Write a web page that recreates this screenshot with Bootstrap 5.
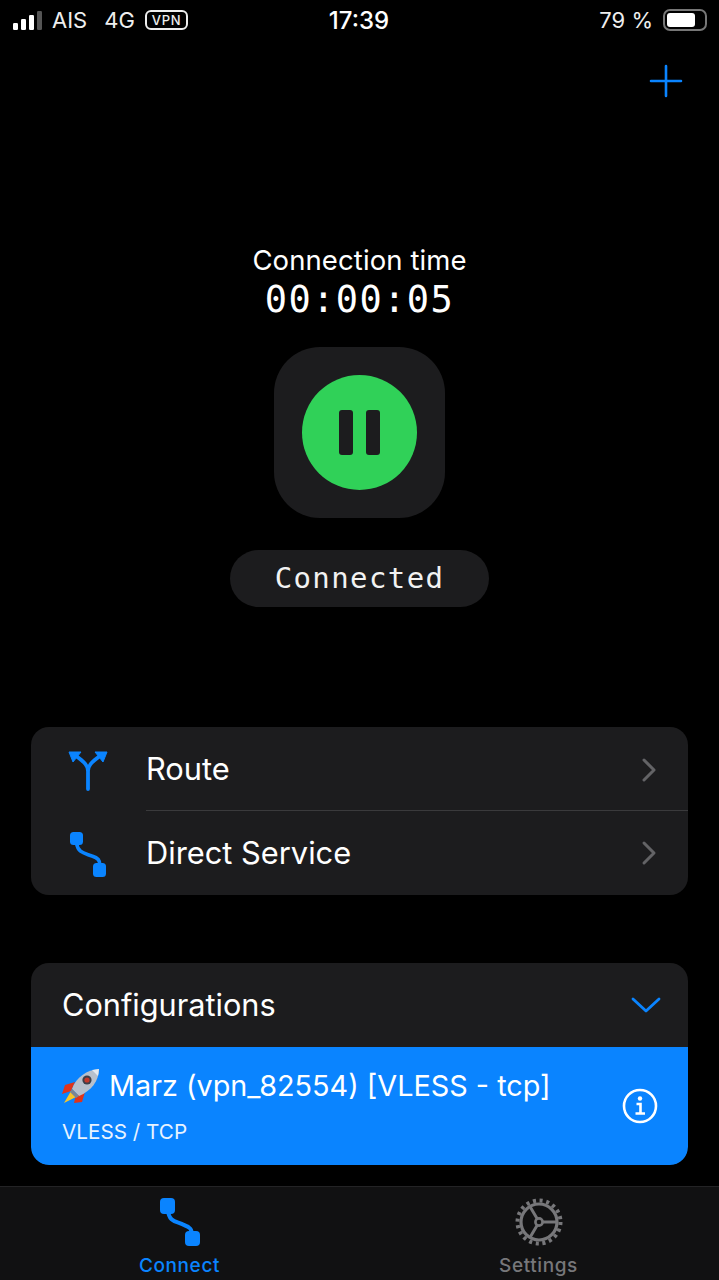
<!DOCTYPE html>
<html lang="en">
<head>
  <meta charset="UTF-8" />
  <meta name="viewport" content="width=device-width, initial-scale=1.0" />
  <title>VPN - Connect</title>
  <link href="https://cdn.jsdelivr.net/npm/bootstrap@5.3.3/dist/css/bootstrap.min.css" rel="stylesheet" />
  <style>
    body {
      background-color: #000;
      color: #fff;
      font-family: "Inter", "Liberation Sans", sans-serif;
      width: 719px;
      height: 1280px;
      overflow: hidden;
    }
    .screen { height: 1280px; }
    .status-bar {
      height: 40px;
      padding: 0 12px 0 13px;
      font-size: 22px;
      color: #eee;
    }
    .status-left { width: 260px; gap: 7px; }
    .status-right { width: 260px; gap: 10px; }
    .status-time { font-size: 24px; font-weight: 500; color: #fff; padding-top: 1px; padding-right: 2px; }
    .carrier { margin-right: 10px; }
    .vpn-tag {
      border: 2px solid #eee;
      border-radius: 6px;
      font-size: 13px;
      font-weight: 500;
      line-height: 16px;
      padding: 0 5px;
      margin-left: 3px;
      letter-spacing: .7px;
    }
    .battery {
      width: 44px;
      height: 22px;
      border: 2px solid #777;
      border-radius: 7px;
      padding: 2px;
    }
    .battery-fill { height: 100%; background: #fff; border-radius: 3px; }
    .add-row { height: 82px; padding-right: 36px; padding-top: 24px; }
    .hero { margin-top: 118px; }
    .time-label { font-size: 27.5px; line-height: 40px; letter-spacing: .1px; }
    .time-value, .state-text { font-family: "DejaVu Sans Mono", "Liberation Mono", monospace; }
    .time-value { font-size: 37px; line-height: 40px; letter-spacing: 1.4px; }
    .power-tile {
      width: 171px;
      height: 171px;
      margin-top: 27px;
      background: #1c1c1e;
      border-radius: 46px;
    }
    .power-btn {
      width: 115px;
      height: 115px;
      background: #30d158;
      border-radius: 50%;
      gap: 13px;
    }
    .pause-bar { width: 14px; height: 45px; background: #1c1c1e; border-radius: 3px; }
    .state-pill {
      width: 259px;
      height: 57px;
      margin-top: 32px;
      background: #1c1c1e;
      border-radius: 29px;
      font-size: 29px;
      letter-spacing: 1.4px;
      color: #f2f2f2;
    }
    .panel {
      margin: 0 31px;
      background: #1c1c1e;
      border-radius: 18px;
      overflow: hidden;
    }
    .panel-routes { margin-top: 120px; }
    .panel-configs { margin-top: 68px; }
    .route-row { height: 85px; font-size: 30.8px; }
    .route-row:first-child { height: 83px; }
    .route-row:first-child .route-body { padding-top: 2px; }
    .route-icon { width: 115px; padding-left: 37px; }
    .route-body { height: 100%; padding-right: 31px; }
    .route-row + .route-row .route-body { border-top: 1px solid #3a3a3c; }
    .config-head { height: 84px; padding: 0 27px 0 31px; font-size: 30.7px; }
    .config-item {
      height: 118px;
      background: #0a84ff;
      padding: 0 30px 0 31px;
      border-radius: 0 0 18px 18px;
    }
    .config-name { font-size: 28.8px; line-height: 34px; gap: 9px; }
    .config-type { font-size: 20.7px; line-height: 26px; margin-top: 15px; color: #e8f3ff; }
    .tab-bar {
      margin-top: 21px;
      height: 94px;
      background: #111112;
      border-top: 1px solid #232325;
    }
    .tab-item { width: 359px; font-size: 19px; font-weight: 500; letter-spacing: .6px; line-height: 24px; padding-top: 11px; }
    .tab-item svg { margin-bottom: 8px; display: block; }
    .tab-on { color: #0a84ff; }
    .tab-off { color: #77777a; padding-right: 2px; }
  </style>
</head>
<body>
  <div class="screen d-flex flex-column">

    <div class="status-bar d-flex align-items-center justify-content-between">
      <div class="status-left d-flex align-items-center">
        <svg width="32" height="20" viewBox="0 0 32 20">
          <rect x="0" y="13" width="5" height="7" rx="1.2" fill="#fff"/>
          <rect x="8" y="9" width="5" height="11" rx="1.2" fill="#fff"/>
          <rect x="16" y="5" width="5" height="15" rx="1.2" fill="#fff"/>
          <rect x="24" y="1" width="5" height="19" rx="1.2" fill="#555"/>
        </svg>
        <span class="carrier">AIS</span>
        <span>4G</span>
        <span class="vpn-tag">VPN</span>
      </div>
      <div class="status-time">17:39</div>
      <div class="status-right d-flex align-items-center justify-content-end">
        <span>79 %</span>
        <div class="battery"><div class="battery-fill" style="width: 79%"></div></div>
      </div>
    </div>

    <div class="add-row d-flex justify-content-end">
      <svg width="34" height="34" viewBox="0 0 34 34" fill="none" stroke="#0a84ff" stroke-width="2.6" stroke-linecap="round">
        <path d="M17 2V32M2 17H32"/>
      </svg>
    </div>

    <div class="hero d-flex flex-column align-items-center text-center">
      <div class="time-label">Connection time</div>
      <div class="time-value">00:00:05</div>
      <div class="power-tile d-flex align-items-center justify-content-center">
        <div class="power-btn d-flex align-items-center justify-content-center">
          <div class="pause-bar"></div>
          <div class="pause-bar"></div>
        </div>
      </div>
      <div class="state-pill state-text d-flex align-items-center justify-content-center">Connected</div>
    </div>

    <div class="panel panel-routes">
      <div class="route-row d-flex align-items-center">
        <div class="route-icon">
          <svg width="40" height="42" viewBox="0 0 40 42" fill="none">
            <path d="M20 39V21C20 14 14 11 7 5M20 21C20 14 26 11 33 5" stroke="#0a84ff" stroke-width="3.8" stroke-linecap="round"/>
            <path d="M1 2H13L5 12ZM39 2H27L35 12Z" fill="#0a84ff" stroke="#0a84ff" stroke-linejoin="round"/>
          </svg>
        </div>
        <div class="route-body flex-grow-1 d-flex align-items-center justify-content-between">
          <span>Route</span>
          <svg width="16" height="26" viewBox="0 0 16 26" fill="none" stroke="#636366" stroke-width="3" stroke-linecap="round" stroke-linejoin="round"><path d="M3 3L13 13L3 23"/></svg>
        </div>
      </div>
      <div class="route-row d-flex align-items-center">
        <div class="route-icon">
          <svg width="40" height="46" viewBox="0 0 40 46" fill="none">
            <path d="M8.5 12C10 22 16 22 24 25C30 27 32 29 32 35" stroke="#0a84ff" stroke-width="3.6"/>
            <rect x="2" y="1" width="13" height="13" rx="3.5" fill="#0a84ff"/>
            <rect x="25" y="32" width="13" height="14" rx="3.5" fill="#0a84ff"/>
          </svg>
        </div>
        <div class="route-body flex-grow-1 d-flex align-items-center justify-content-between">
          <span>Direct Service</span>
          <svg width="16" height="26" viewBox="0 0 16 26" fill="none" stroke="#636366" stroke-width="3" stroke-linecap="round" stroke-linejoin="round"><path d="M3 3L13 13L3 23"/></svg>
        </div>
      </div>
    </div>

    <div class="panel panel-configs">
      <div class="config-head d-flex align-items-center justify-content-between">
        <span>Configurations</span>
        <svg width="30" height="18" viewBox="0 0 30 18" fill="none" stroke="#0a84ff" stroke-width="2.8" stroke-linecap="round" stroke-linejoin="round"><path d="M2 3L15 15L28 3"/></svg>
      </div>
      <div class="config-item d-flex align-items-center justify-content-between">
        <div>
          <div class="config-name d-flex align-items-center">
            <svg width="38" height="36" viewBox="0 0 38 36">
              <path d="M13 14L3 17L0 26L9 23Z" fill="#e0341a"/>
              <path d="M23 24L20 34L12 35L14 27Z" fill="#e0341a"/>
              <path d="M9 23L2 35L14 29Z" fill="#f7c42c"/>
              <path d="M10 21C14 9 25 2 37 1C37 13 29 23 17 28Z" fill="#b7c0cc"/>
              <path d="M30 2L37 1L36 8Z" fill="#e4e9ef"/>
              <circle cx="25" cy="12" r="4.6" fill="#3c3f4a"/>
              <circle cx="25" cy="12" r="2.6" fill="#c2392b"/>
              <path d="M10 21L17 28L14 30L8 24Z" fill="#7b8594"/>
            </svg>
            <span>Marz (vpn_82554) [VLESS - tcp]</span>
          </div>
          <div class="config-type">VLESS / TCP</div>
        </div>
        <svg width="36" height="36" viewBox="0 0 36 36" fill="none" stroke="#fff">
          <circle cx="18" cy="18" r="16" stroke-width="2.6"/>
          <circle cx="18" cy="10.5" r="2.2" fill="#fff" stroke="none"/>
          <path d="M14.5 16H18.5V25.5M13.5 25.5H23" stroke-width="2.6"/>
        </svg>
      </div>
    </div>

    <div class="tab-bar d-flex justify-content-between">
      <div class="tab-item tab-on d-flex flex-column align-items-center">
        <svg width="40" height="48" viewBox="0 0 40 48" fill="none">
          <path d="M8 12C9 25 17 23 24 27C30 29 32 31 32 38" stroke="#0a84ff" stroke-width="4"/>
          <rect x="0" y="0" width="15" height="16" rx="4" fill="#0a84ff"/>
          <rect x="25" y="33" width="15" height="15" rx="4" fill="#0a84ff"/>
        </svg>
        <span>Connect</span>
      </div>
      <div class="tab-item tab-off d-flex flex-column align-items-center">
        <svg width="48" height="48" viewBox="0 0 48 48" fill="none" stroke="#77777a">
          <circle cx="24" cy="24" r="21.5" stroke-width="4" stroke-dasharray="3.1 3.65"/>
          <circle cx="24" cy="24" r="18" stroke-width="3.2"/>
          <circle cx="24" cy="24" r="3.6" stroke-width="2.6"/>
          <path d="M27.6 24H42M22.2 27.2L14.8 39.8M22.2 20.8L14.8 8.2" stroke-width="3"/>
        </svg>
        <span>Settings</span>
      </div>
    </div>

  </div>
  <script src="https://cdn.jsdelivr.net/npm/bootstrap@5.3.3/dist/js/bootstrap.bundle.min.js"></script>
</body>
</html>
